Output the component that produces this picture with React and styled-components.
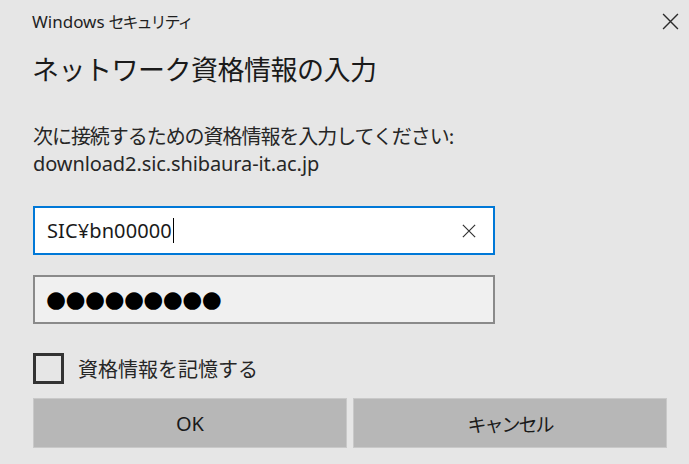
import React from 'react'
import styled, { createGlobalStyle } from 'styled-components'

const GlobalStyle = createGlobalStyle`
  html, body {
    margin: 0;
    padding: 0;
    background: #e6e6e6;
  }
  #root {
    width: 689px;
    height: 464px;
    overflow: hidden;
  }
`

const latin = `"Noto Sans", "Noto Sans CJK JP", sans-serif`
const cjk = `"Noto Sans CJK JP", "Noto Sans", sans-serif`

const Dialog = styled.div`
  width: 689px;
  height: 464px;
  box-sizing: border-box;
  padding: 0 22px 0 33px;
  display: flex;
  flex-direction: column;
  background: #e6e6e6;
  color: #1b1b1b;
  font-family: ${latin};
`

const TitleBar = styled.div`
  height: 42px;
  display: flex;
  align-items: center;
  justify-content: space-between;
`

const Caption = styled.div`
  font-size: 17px;
  line-height: 42px;
  margin-left: -1px;
  color: #1f1f1f;
`

const Kana = styled.span`
  font-family: ${cjk};
  font-size: 16px;
  letter-spacing: -2px;
  margin-left: 4px;
`

const CloseButton = styled.div`
  width: 24px;
  height: 24px;
  margin-right: -15px;
  display: grid;
  place-items: center;
  color: #2b2b2b;
`

const Heading = styled.h1`
  margin: 6px 0 0 -1px;
  height: 42px;
  font-family: ${cjk};
  font-weight: 400;
  font-size: 27px;
  line-height: 42px;
  letter-spacing: -0.5px;
  color: #1a1a1a;
`

const Message = styled.div`
  margin-top: 32px;
  display: flex;
  flex-direction: column;
  color: #262626;
`

const Line = styled.div`
  height: 28px;
  line-height: 28px;
  font-size: 20px;
  font-family: ${p => (p.$cjk ? cjk : latin)};
  letter-spacing: ${p => (p.$cjk ? '-1.05px' : '-0.1px')};
  white-space: nowrap;
`

const Fields = styled.div`
  margin-top: 28px;
  display: flex;
  flex-direction: column;
  gap: 20px;
  width: 462px;
`

const Field = styled.div`
  height: 49px;
  box-sizing: border-box;
  border: 2px solid ${p => (p.$focused ? '#0078d7' : '#8a8a8a')};
  background: ${p => (p.$focused ? '#ffffff' : '#f0f0f0')};
  display: flex;
  align-items: center;
  padding: 0 12px;
`

const FieldText = styled.span`
  font-size: 20px;
  letter-spacing: 0.1px;
  color: #1a1a1a;
  flex: 1;
  display: flex;
  align-items: center;
`

const Caret = styled.span`
  display: inline-block;
  width: 1px;
  height: 25px;
  background: #000;
  margin-left: 1px;
`

const Mask = styled.span`
  font-family: "DejaVu Sans", sans-serif;
  font-size: 23px;
  letter-spacing: -0.6px;
  color: #000;
  line-height: 1;
  margin-left: -1px;
`

const ClearButton = styled.div`
  width: 20px;
  height: 20px;
  margin-right: 2px;
  display: grid;
  place-items: center;
  color: #333;
`

const Remember = styled.label`
  margin-top: 29px;
  height: 31px;
  display: flex;
  align-items: center;
  gap: 14px;
`

const Box = styled.span`
  width: 31px;
  height: 31px;
  box-sizing: border-box;
  border: 3px solid #333333;
  background: transparent;
`

const RememberText = styled.span`
  font-family: ${cjk};
  font-size: 20px;
  color: #262626;
`

const Buttons = styled.div`
  margin-top: 14px;
  display: grid;
  grid-template-columns: 1fr 1fr;
  gap: 6px;
`

const Button = styled.button`
  height: 50px;
  border: none;
  box-shadow: inset 0 0 0 1px #c9c9c9;
  background: #b7b7b7;
  color: #1a1a1a;
  font-family: ${p => (p.$cjk ? cjk : latin)};
  font-size: ${p => (p.$cjk ? '19px' : '20px')};
  letter-spacing: ${p => (p.$cjk ? '-2px' : '0')};
  padding: 0;
  cursor: default;
`

function Cross({ size, stroke }) {
  return (
    <svg width={size} height={size} viewBox="0 0 16 16" fill="none">
      <path d="M1 1L15 15M15 1L1 15" stroke="currentColor" strokeWidth={stroke} />
    </svg>
  )
}

const mask = Array(9).fill('\u25CF').join('')

export default function App() {
  return (
    <>
      <GlobalStyle />
      <Dialog>
        <TitleBar>
          <Caption>
            Windows<Kana>セキュリティ</Kana>
          </Caption>
          <CloseButton>
            <Cross size={17} stroke={1.3} />
          </CloseButton>
        </TitleBar>
        <Heading>ネットワーク資格情報の入力</Heading>
        <Message>
          <Line $cjk>次に接続するための資格情報を入力してください:</Line>
          <Line>download2.sic.shibaura-it.ac.jp</Line>
        </Message>
        <Fields>
          <Field $focused>
            <FieldText>
              SIC¥bn00000<Caret />
            </FieldText>
            <ClearButton>
              <Cross size={14} stroke={1.4} />
            </ClearButton>
          </Field>
          <Field>
            <Mask>{mask}</Mask>
          </Field>
        </Fields>
        <Remember>
          <Box />
          <RememberText>資格情報を記憶する</RememberText>
        </Remember>
        <Buttons>
          <Button>OK</Button>
          <Button $cjk>キャンセル</Button>
        </Buttons>
      </Dialog>
    </>
  )
}
